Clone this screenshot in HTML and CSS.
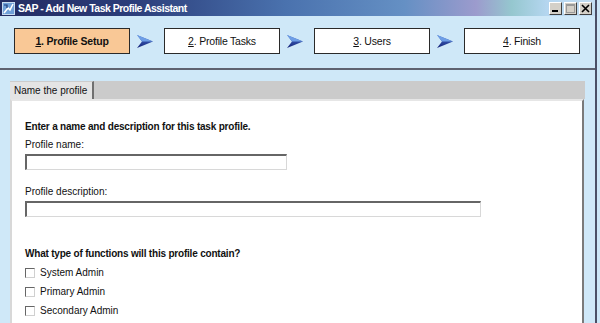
FILE: index.html
```html
<!DOCTYPE html>
<html lang="en">
  <head>
    <meta charset="UTF-8" />
    <title>SAP - Add New Task Profile Assistant</title>
    <link rel="stylesheet" href="styles.css">
  </head>
  <body>
    <div class="window">
      <div class="titlebar">
        <svg class="app-icon" width="13" height="13" viewBox="0 0 13 13">
          <rect x="0.5" y="0.5" width="12" height="12" fill="#6fa0d8" stroke="#c8dcf0"/>
          <path d="M2 11 L6 6 L8 8 L11 2" stroke="#fff" stroke-width="1.6" fill="none"/>
          <path d="M2 3 L5 3 L5 6" stroke="#1d3b7a" stroke-width="1.2" fill="none"/>
        </svg>
        <span class="title">SAP - Add New Task Profile Assistant</span>
        <div class="win-buttons">
          <span class="win-btn"><svg width="9" height="9" viewBox="0 0 9 9"><rect x="1" y="6" width="6" height="2" fill="#000"/></svg></span>
          <span class="win-btn"><svg width="9" height="9" viewBox="0 0 9 9"><rect x="0.5" y="0.5" width="8" height="8" fill="none" stroke="#9a9a9a"/><rect x="0.5" y="0.5" width="8" height="1.5" fill="#9a9a9a"/></svg></span>
          <span class="win-btn"><svg width="9" height="9" viewBox="0 0 9 9"><path d="M1 1 L8 8 M8 1 L1 8" stroke="#000" stroke-width="1.6"/></svg></span>
        </div>
      </div>

      <div class="steps">
        <div class="step active"><u>1</u>. Profile Setup</div>
        <svg class="arrow" width="16" height="13" viewBox="0 0 16 13">
          <defs>
            <linearGradient id="ag" x1="0" y1="0" x2="0" y2="1">
              <stop offset="0" stop-color="#4a78d0"/>
              <stop offset="1" stop-color="#16247a"/>
            </linearGradient>
          </defs>
          <polygon points="0,0 16,6.5 0,13 5,6.5" fill="url(#ag)"/>
          <polygon points="0,0 16,6.5 5,6.5" fill="#6e9ee6"/>
        </svg>
        <div class="step"><u>2</u>. Profile Tasks</div>
        <svg class="arrow" width="16" height="13" viewBox="0 0 16 13">
          <polygon points="0,0 16,6.5 0,13 5,6.5" fill="url(#ag)"/>
          <polygon points="0,0 16,6.5 5,6.5" fill="#6e9ee6"/>
        </svg>
        <div class="step"><u>3</u>. Users</div>
        <svg class="arrow" width="16" height="13" viewBox="0 0 16 13">
          <polygon points="0,0 16,6.5 0,13 5,6.5" fill="url(#ag)"/>
          <polygon points="0,0 16,6.5 5,6.5" fill="#6e9ee6"/>
        </svg>
        <div class="step"><u>4</u>. Finish</div>
      </div>

      <div class="tabs">
        <div class="tab">Name the profile</div>
      </div>

      <div class="panel">
        <h2 class="heading">Enter a name and description for this task profile.</h2>
        <label class="field-label">Profile name:</label>
        <input type="text" class="textbox short" />
        <label class="field-label desc">Profile description:</label>
        <input type="text" class="textbox long" />

        <h2 class="heading functions">What type of functions will this profile contain?</h2>
        <label class="check"><span class="box"></span>System Admin</label>
        <label class="check"><span class="box"></span>Primary Admin</label>
        <label class="check"><span class="box"></span>Secondary Admin</label>
      </div>
    </div>
  </body>
</html>
```

FILE: styles.css
```css
body {
  margin: 0;
  background-color: #cce6f7;
  font-family: "Liberation Sans", Arial, sans-serif;
  font-size: 10px;
  color: #111;
  overflow: hidden;
}
.window {
  width: 595px;
  height: 323px;
  border-right: 2px solid #4a4f66;
  background-color: #cfe8f8;
  display: flex;
  flex-direction: column;
}
.titlebar {
  height: 16px;
  display: flex;
  align-items: center;
  padding-left: 2px;
  background: linear-gradient(to right, #232c62 0%, #2b3d7a 22%, #4a72ae 48%, #6590c4 68%, #9c9bcd 80%, #95c7cf 86%, #b5d6f0 92%, #c4def2 100%);
}
.app-icon {
  margin-right: 3px;
}
.title {
  color: #fff;
  font-weight: bold;
  font-size: 10.5px;
  letter-spacing: -0.5px;
}
.win-buttons {
  margin-left: auto;
  margin-right: 3px;
  display: flex;
  gap: 2px;
}
.win-btn {
  width: 11px;
  height: 11px;
  background-color: #d4d0c8;
  border: 1px solid #404040;
  border-top-color: #fff;
  border-left-color: #fff;
  display: flex;
  align-items: center;
  justify-content: center;
}
.steps {
  display: flex;
  align-items: center;
  padding: 12px 0 0 14px;
  height: 26px;
}
.step {
  width: 114px;
  height: 24px;
  border: 1px solid #2a2a2a;
  background-color: #fff;
  display: flex;
  align-items: center;
  justify-content: center;
  font-size: 10.5px;
  letter-spacing: -0.2px;
}
.step.active {
  background-color: #f9c896;
  font-weight: bold;
}
.arrow {
  margin: 0 11px 0 7px;
}
.tabs {
  display: flex;
  margin-top: 14px;
  border-top: 2px solid #5e6270;
  padding: 11px 0 0 10px;
}
.tabs::after {
  content: "";
  flex: 1;
  background-color: #cbcbcb;
  margin-right: 10px;
}
.tab {
  background-color: #e4e4e4;
  border-right: 2px solid #707070;
  border-top: 1px solid #ccc;
  padding: 0 5px 0 4px;
  height: 17px;
  line-height: 17px;
  font-size: 10px;
}
.panel {
  flex: 1;
  margin: 0 11px 0 10px;
  background-color: #fff;
  border-left: 2px solid #d8d8d8;
  border-right: 2px solid #7a7a7a;
  border-top: 2px solid #e6e6e6;
  padding: 20px 0 0 13px;
  display: flex;
  flex-direction: column;
  align-items: flex-start;
}
.heading {
  margin: 0;
  font-size: 10px;
  font-weight: bold;
  letter-spacing: -0.2px;
}
.field-label {
  margin-top: 7px;
}
.field-label.desc {
  margin-top: 16px;
}
.textbox {
  margin: 4px 0 0;
  height: 16px;
  box-sizing: border-box;
  border: 1px solid #d8d8d8;
  border-top: 2px solid #666;
  border-left: 2px solid #666;
  padding: 0;
}
.textbox.short {
  width: 262px;
}
.textbox.long {
  width: 456px;
}
.heading.functions {
  margin-top: 31px;
  margin-bottom: 4px;
}
.check {
  display: flex;
  align-items: center;
  height: 19px;
}
.box {
  width: 10px;
  height: 10px;
  box-sizing: border-box;
  border: 1px solid #d0d0d0;
  border-top-color: #666;
  border-left-color: #666;
  margin-right: 5px;
}
```
